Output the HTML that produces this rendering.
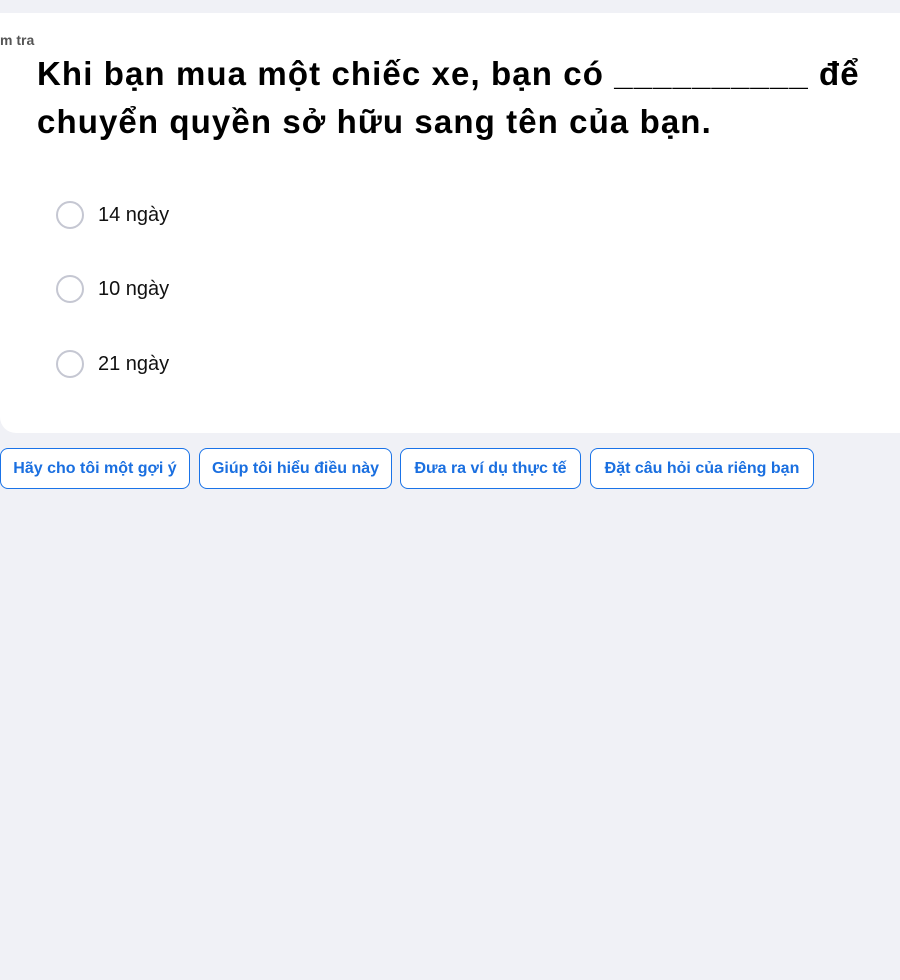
<html><head><style>
body{margin:0;background:#f0f1f6;font-family:"Liberation Sans",sans-serif;width:900px;height:980px;overflow:hidden;position:relative}
.card{position:absolute;left:0;top:13px;width:920px;height:420px;background:#fff;border-radius:0 16px 16px 16px}
.lbl{position:absolute;left:0;top:32px;font-size:14px;color:#555;font-weight:bold}
h1{position:absolute;left:37px;top:50px;margin:0;font-size:33px;letter-spacing:1.1px;line-height:48px;font-weight:bold;color:#000;width:860px}
.opt{position:absolute;left:56px;display:flex;align-items:center;font-size:20px;color:#111}
.opt i{width:24px;height:24px;border:2px solid #c5c7d2;border-radius:50%;margin-right:14px;box-sizing:content-box}
.btn{position:absolute;top:448px;height:39px;border:1px solid #1a73e8;border-radius:8px;background:#fff;color:#1a6fe0;font-size:16px;font-weight:bold;line-height:39px;text-align:center;box-sizing:content-box}
</style></head><body>
<div class="card"></div>
<div class="lbl">m tra</div>
<h1>Khi bạn mua một chiếc xe, bạn có __________ để chuyển quyền sở hữu sang tên của bạn.</h1>
<div class="opt" style="top:201px"><i></i>14 ngày</div>
<div class="opt" style="top:275px"><i></i>10 ngày</div>
<div class="opt" style="top:350px"><i></i>21 ngày</div>
<div class="btn" style="left:0;width:188px">Hãy cho tôi một gợi ý</div>
<div class="btn" style="left:199px;width:191px">Giúp tôi hiểu điều này</div>
<div class="btn" style="left:400px;width:179px">Đưa ra ví dụ thực tế</div>
<div class="btn" style="left:590px;width:222px">Đặt câu hỏi của riêng bạn</div>
</body></html>
